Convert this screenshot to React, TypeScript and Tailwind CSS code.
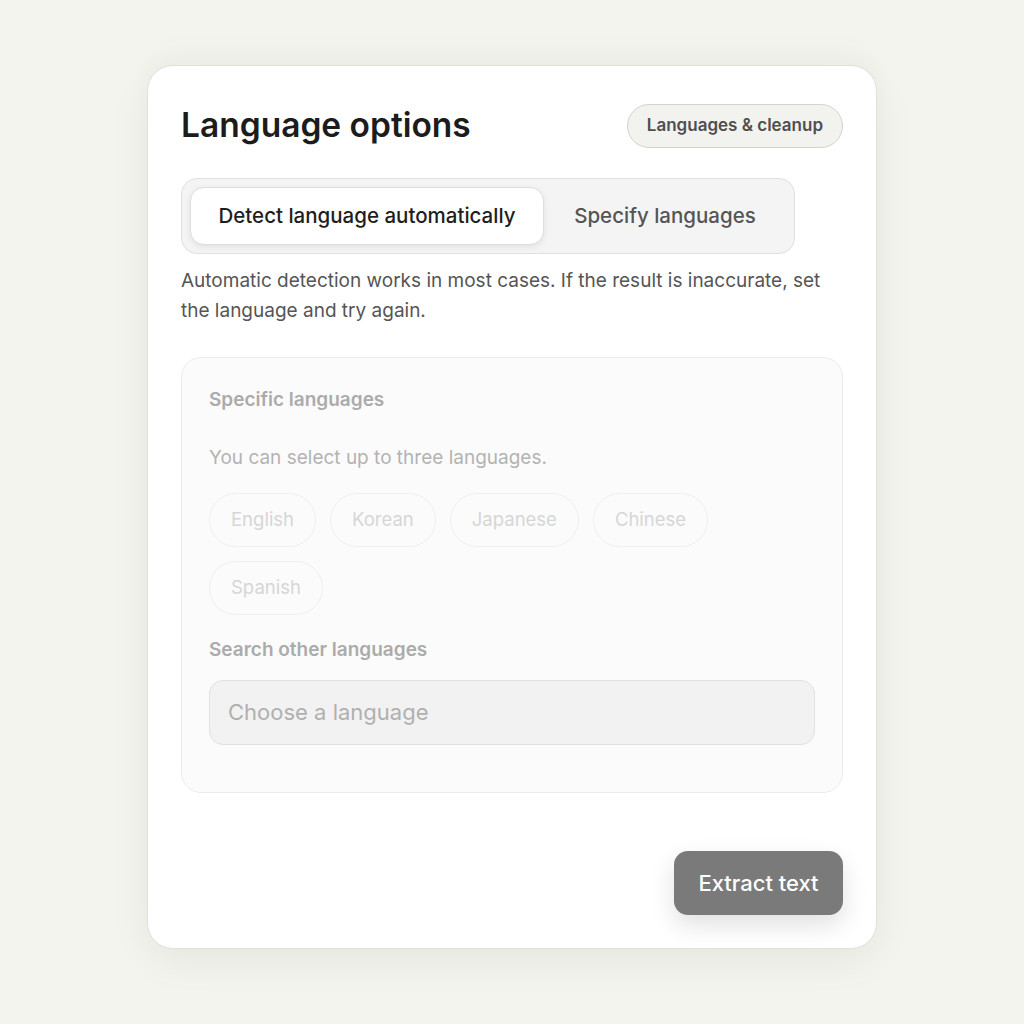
import React from "react";

export default function App() {
  const chips = ["English", "Korean", "Japanese", "Chinese", "Spanish"];
  return (
    <div
      className="min-h-screen w-full bg-[#f4f4ef] flex justify-center pt-[65px]"
      style={{ fontFamily: "Inter, 'Noto Sans', sans-serif" }}
    >
      <div className="w-[730px] h-[884px] bg-white rounded-[26px] border border-[#e2e1d6] shadow-[0_12px_40px_rgba(0,0,0,0.06),0_-20px_20px_rgba(0,0,0,0.015)] px-[33px] pt-[37px] flex flex-col">
        <div className="flex items-center justify-between">
          <h1 className="text-[33.5px] font-semibold text-[#1c1c1c] leading-[44px]">
            Language options
          </h1>
          <div className="h-[44px] translate-y-[1px] px-[19px] rounded-full border border-[#d5d4ca] bg-[#f2f2ef] flex items-center text-[17px] font-semibold text-[#4f4f4f]">
            Languages &amp; cleanup
          </div>
        </div>

        <div className="mt-[31px] w-[614px] h-[76px] rounded-[16px] border border-[#e0e0e0] bg-[#f4f4f4] p-[8px] flex">
          <div className="w-[354px] h-[58px] rounded-[14px] bg-white border border-[#dedede] shadow-[0_2px_6px_rgba(0,0,0,0.08)] flex items-center justify-center text-[20.5px] font-medium text-[#1e1e1e]">
            Detect language automatically
          </div>
          <div className="flex-1 flex items-center justify-center text-[20.5px] font-medium text-[#555555]">
            Specify languages
          </div>
        </div>

        <p className="mt-[12px] text-[19px] leading-[30px] text-[#555555]">
          Automatic detection works in most cases. If the result is inaccurate, set
          the language and try again.
        </p>

        <div className="mt-[31px] w-[662px] rounded-[20px] border border-[#ececec] bg-[#fbfbfb] px-[27px] pt-[29px] pb-[47px]">
          <div className="text-[19px] font-semibold text-[#ababab] leading-[26px]">
            Specific languages
          </div>
          <div className="mt-[32px] text-[19px] text-[#b3b3b3] leading-[26px]">
            You can select up to three languages.
          </div>
          <div className="mt-[22px] flex flex-wrap gap-x-[14px] gap-y-[14px] w-[540px]">
            {chips.map((c) => (
              <div
                key={c}
                className="h-[54px] px-[21px] rounded-full border border-[#efefef] flex items-center text-[18.5px] text-[#d6d6d6]"
              >
                {c}
              </div>
            ))}
          </div>
          <div className="mt-[22px] text-[19px] font-semibold text-[#ababab] leading-[26px]">
            Search other languages
          </div>
          <div className="mt-[17px] h-[65px] rounded-[14px] border border-[#e1e1e1] bg-[#f2f2f2] px-[18px] flex items-center text-[22px] text-[#b0b0b0]">
            Choose a language
          </div>
        </div>

        <div className="mt-auto mb-[33px] flex justify-end">
          <div className="w-[169px] h-[64px] rounded-[14px] bg-[#7a7a7a] shadow-[0_10px_24px_rgba(0,0,0,0.12)] flex items-center justify-center text-[22px] font-medium text-white">
            Extract text
          </div>
        </div>
      </div>
    </div>
  );
}
